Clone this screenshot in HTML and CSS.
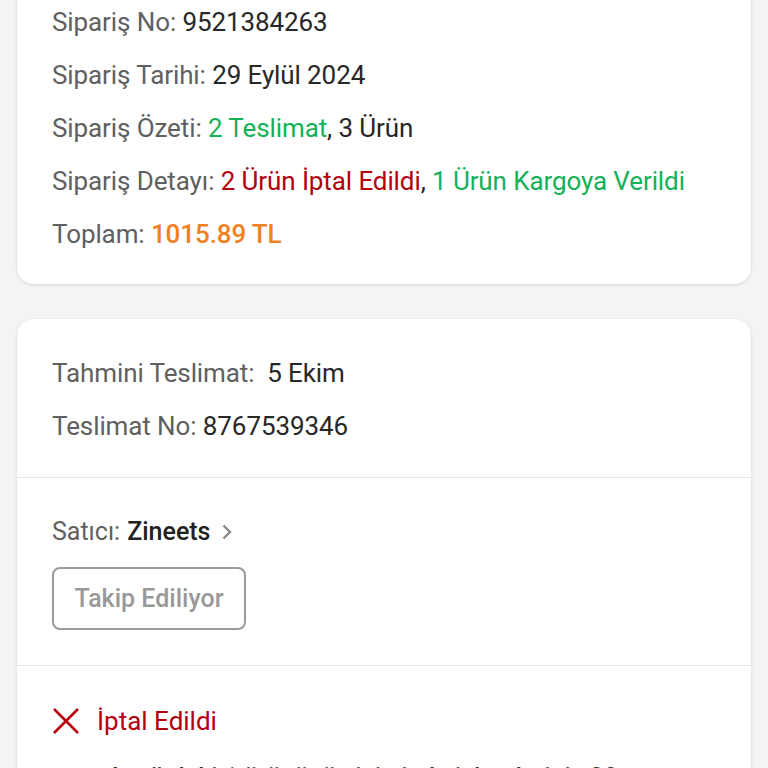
FILE: index.html
```html
<!DOCTYPE html>
<html lang="tr">
<head>
<meta charset="utf-8">
<link rel="stylesheet" href="styles.css">
</head>
<body>
<div class="page">
  <section class="card card-summary">
    <div class="row"><span class="label">Sipariş No:</span> <span class="value">9521384263</span></div>
    <div class="row"><span class="label">Sipariş Tarihi:</span> <span class="value">29 Eylül 2024</span></div>
    <div class="row"><span class="label">Sipariş Özeti:</span> <span class="green">2 Teslimat</span><span class="value">, 3 Ürün</span></div>
    <div class="row"><span class="label">Sipariş Detayı:</span> <span class="red">2 Ürün İptal Edildi</span><span class="value">,</span> <span class="green">1 Ürün Kargoya Verildi</span></div>
    <div class="row"><span class="label">Toplam:</span> <span class="orange">1015.89 TL</span></div>
  </section>

  <section class="card card-delivery">
    <div class="section section-info">
      <div class="row"><span class="label">Tahmini Teslimat:</span>&nbsp; <span class="value">5 Ekim</span></div>
      <div class="row"><span class="label">Teslimat No:</span> <span class="value">8767539346</span></div>
    </div>
    <div class="section section-seller">
      <div class="seller"><span class="label">Satıcı:</span> <span class="value seller-name">Zineets</span>
        <svg class="chev" width="12" height="18" viewBox="0 0 12 18"><path d="M2.5 2.5 L9 9 L2.5 15.5" fill="none" stroke="#8a8a8a" stroke-width="2.4"/></svg>
      </div>
      <button class="follow">Takip Ediliyor</button>
    </div>
    <div class="section section-status">
      <div class="status">
        <svg class="xicon" width="28" height="28" viewBox="0 0 28 28"><path d="M2 2 L26 26 M26 2 L2 26" stroke="#b8000f" stroke-width="2.6" fill="none"/></svg>
        <span class="status-text">İptal Edildi</span>
      </div>
      <p class="note">Aşağıdaki 1 ürününüz için iade işlemleriniz 29 Eylül 2024 tarihinde başlatılmıştır.</p>
    </div>
  </section>
</div>
</body>
</html>
```

FILE: styles.css
```css
html, body {
  margin: 0;
  padding: 0;
  background: #f4f4f4;
  font-family: Roboto, "Noto Sans", "DejaVu Sans", sans-serif;
  overflow: hidden;
}
.page {
  display: flex;
  flex-direction: column;
  gap: 35px;
  padding: 0 17px;
  margin-top: -29px;
}
.card {
  background: #fff;
  border-radius: 16px;
  box-shadow: 0 1px 3px rgba(0,0,0,0.12), 0 0 1px rgba(0,0,0,0.08);
}
.card-summary {
  padding: 25px 35px 23px;
}
.row {
  font-size: 26px;
  font-weight: 400;
  line-height: 53px;
  white-space: nowrap;
  letter-spacing: -0.1px;
}
.label { color: #606060; }
.value { color: #272727; }
.green { color: #14b257; }
.red { color: #b3000e; }
.orange { color: #f2801f; font-weight: 500; }
.red, .green { font-weight: 400; }

.section {
  border-bottom: 1px solid #e6e6e6;
}
.section-info {
  padding: 28px 35px 24px;
}
.section-seller {
  padding: 39px 35px 35px;
}
.seller {
  font-size: 25px;
  font-weight: 400;
  line-height: 30px;
  display: flex;
  align-items: center;
}
.seller .label { margin-right: 7px; }
.seller-name { color: #222; font-weight: 500; }
.chev { margin-left: 11px; }
.follow {
  display: block;
  margin-top: 20px;
  height: 63px;
  width: 194px;
  border: 2px solid #9a9a9a;
  border-radius: 8px;
  background: #fff;
  color: #999999;
  font-family: Roboto, "Noto Sans", sans-serif;
  font-size: 25px;
  font-weight: 500;
  padding: 0;
}
.section-status {
  border-bottom: none;
  padding: 40px 35px 40px;
}
.status {
  display: flex;
  align-items: center;
  gap: 17px;
}
.xicon { flex: none; }
.status-text {
  color: #b3000e;
  font-size: 26px;
  font-weight: 400;
  line-height: 30px;
}
.note {
  margin: 25px 0 0 55px;
  max-width: 545px;
  font-size: 25px;
  font-weight: 500;
  line-height: 34px;
  color: #333;
}
```
